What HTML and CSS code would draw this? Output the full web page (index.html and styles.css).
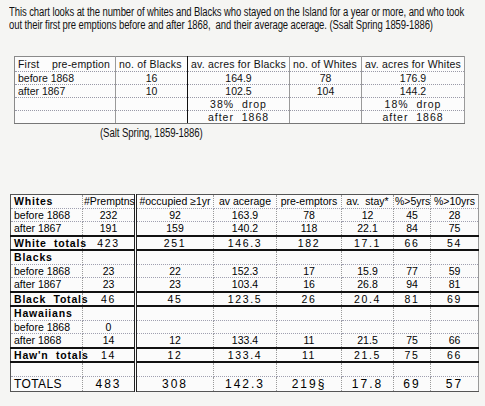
FILE: index.html
```html
<!DOCTYPE html>
<html lang="en">
<head>
    <meta charset="UTF-8">
    <title>Salt Spring pre-emptions</title>
    <link rel="stylesheet" href="styles.css">
</head>
<body>

    <div class="intro-wrap">
        <p class="intro">This chart looks at the number of whites and Blacks who stayed on the Island for a year or more, and who took out their first pre emptions before and after 1868,&nbsp; and their average acerage. (Ssalt Spring 1859-1886)</p>
    </div>

    <table class="summary">
        <colgroup>
            <col class="s-c1"><col class="s-c2"><col class="s-c3"><col class="s-c4"><col class="s-c5">
        </colgroup>
        <tr class="s-head">
            <td class="lbl">First&nbsp;&nbsp;&nbsp; pre-emption</td>
            <td class="split">no. of Blacks</td>
            <td>av. acres for Blacks</td>
            <td>no. of Whites</td>
            <td class="split-l">av. acres for Whites</td>
        </tr>
        <tr>
            <td class="lbl">before 1868</td>
            <td class="split num">16</td>
            <td class="num">164.9</td>
            <td class="num">78</td>
            <td class="split-l num">176.9</td>
        </tr>
        <tr>
            <td class="lbl">after 1867</td>
            <td class="split num">10</td>
            <td class="num">102.5</td>
            <td class="num">104</td>
            <td class="split-l num">144.2</td>
        </tr>
        <tr>
            <td class="lbl"></td>
            <td class="split"></td>
            <td class="num wide">38%&nbsp; drop</td>
            <td></td>
            <td class="split-l num wide">18%&nbsp; drop</td>
        </tr>
        <tr class="s-last">
            <td class="lbl open"></td>
            <td class="split"></td>
            <td class="num wide">after&nbsp; 1868</td>
            <td></td>
            <td class="split-l num wide">after&nbsp; 1868</td>
        </tr>
    </table>

    <div class="caption-wrap">
        <p class="caption">(Salt Spring, 1859-1886)</p>
    </div>

    <table class="detail">
        <colgroup>
            <col class="d-c1"><col class="d-c2"><col class="d-c3"><col class="d-c4">
            <col class="d-c5"><col class="d-c6"><col class="d-c7"><col class="d-c8">
        </colgroup>
        <tr>
            <td class="lbl grp">Whites</td>
            <td class="dbl">#Premptns</td>
            <td class="dbl-l">#occupied ≥1yr</td>
            <td>av acerage</td>
            <td>pre-emptors</td>
            <td>av.&nbsp; stay*</td>
            <td>%&gt;5yrs</td>
            <td>%&gt;10yrs</td>
        </tr>
        <tr>
            <td class="lbl">before 1868</td>
            <td class="dbl">232</td><td class="dbl-l">92</td><td>163.9</td><td>78</td><td>12</td><td>45</td><td>28</td>
        </tr>
        <tr class="pre-total">
            <td class="lbl">after 1867</td>
            <td class="dbl">191</td><td class="dbl-l">159</td><td>140.2</td><td>118</td><td>22.1</td><td>84</td><td>75</td>
        </tr>
        <tr class="total">
            <td class="lbl grp">White&nbsp; totals</td>
            <td class="dbl">423</td><td class="dbl-l">251</td><td>146.3</td><td>182</td><td>17.1</td><td>66</td><td>54</td>
        </tr>
        <tr>
            <td class="lbl grp">Blacks</td>
            <td class="dbl"></td><td class="dbl-l"></td><td></td><td></td><td></td><td></td><td></td>
        </tr>
        <tr>
            <td class="lbl">before 1868</td>
            <td class="dbl">23</td><td class="dbl-l">22</td><td>152.3</td><td>17</td><td>15.9</td><td>77</td><td>59</td>
        </tr>
        <tr class="pre-total">
            <td class="lbl">after 1867</td>
            <td class="dbl">23</td><td class="dbl-l">23</td><td>103.4</td><td>16</td><td>26.8</td><td>94</td><td>81</td>
        </tr>
        <tr class="total">
            <td class="lbl grp">Black&nbsp; Totals</td>
            <td class="dbl">46</td><td class="dbl-l">45</td><td>123.5</td><td>26</td><td>20.4</td><td>81</td><td>69</td>
        </tr>
        <tr>
            <td class="lbl grp">Hawaiians</td>
            <td class="dbl"></td><td class="dbl-l"></td><td></td><td></td><td></td><td></td><td></td>
        </tr>
        <tr>
            <td class="lbl">before 1868</td>
            <td class="dbl">0</td><td class="dbl-l"></td><td></td><td></td><td></td><td></td><td></td>
        </tr>
        <tr class="pre-total">
            <td class="lbl">after 1868</td>
            <td class="dbl">14</td><td class="dbl-l">12</td><td>133.4</td><td>11</td><td>21.5</td><td>75</td><td>66</td>
        </tr>
        <tr class="total">
            <td class="lbl grp">Haw'n&nbsp; totals</td>
            <td class="dbl">14</td><td class="dbl-l">12</td><td>133.4</td><td>11</td><td>21.5</td><td>75</td><td>66</td>
        </tr>
        <tr>
            <td class="lbl"></td>
            <td class="dbl"></td><td class="dbl-l"></td><td></td><td></td><td></td><td></td><td></td>
        </tr>
        <tr class="grand">
            <td class="lbl">TOTALS</td>
            <td class="dbl">483</td><td class="dbl-l">308</td><td>142.3</td><td>219§</td><td>17.8</td><td>69</td><td>57</td>
        </tr>
    </table>

</body>
</html>
```

FILE: styles.css
```css
body {
    margin: 0;
    background-color: #f5f5f3;
    color: #111;
    font-family: 'Liberation Sans', Arial, sans-serif;
}

/* the scan uses a condensed Helvetica, squeeze the regular face */
.intro-wrap {
    height: 26px;
    margin: 6px 0 0 9px;
}

.intro {
    margin: 0;
    width: 595px;
    font-size: 12px;
    line-height: 13px;
    letter-spacing: -0.1px;
    transform: scaleX(0.79);
    transform-origin: left top;
}

/* top summary table */

.summary {
    margin: 24px 0 0 14px;
    border-collapse: collapse;
    table-layout: fixed;
    width: 450px;
    background-color: #fcfcfc;
    font-size: 10.5px;
    border: 1px solid #8a8a8a;
}

.s-c1 { width: 101px; }
.s-c2 { width: 72px; }
.s-c3 { width: 102px; }
.s-c4 { width: 72px; }
.s-c5 { width: 103px; }

.summary td {
    height: 12px;
    padding: 0 3px;
    line-height: 12px;
    white-space: nowrap;
    overflow: visible;
    border-bottom: 1px dotted #9a9aa8;
    border-right: 1px solid #9a9a9a;
}

.summary .s-head td {
    height: 14px;
    letter-spacing: 0.2px;
}

.summary .s-last td {
    border-bottom: 1px solid #777;
}

.summary .lbl {
    text-align: left;
}

.summary .open {
    border-bottom-color: #c8c8c8;
}

.summary .num {
    text-align: center;
}

.summary .wide {
    letter-spacing: 1px;
}

.summary .split {
    border-right: 1.5px solid #111;
}

.summary .split-l {
    border-left: 1.5px solid #111;
}

.caption-wrap {
    height: 14px;
    margin: 2px 0 0 100px;
}

.caption {
    margin: 0;
    width: 140px;
    font-size: 12px;
    line-height: 14px;
    letter-spacing: -0.1px;
    transform: scaleX(0.8);
    transform-origin: left top;
}

/* bottom detail table */

.detail {
    margin: 54px 0 0 10px;
    border-collapse: collapse;
    table-layout: fixed;
    width: 468px;
    background-color: #fbfbfb;
    font-size: 10.5px;
    color: #000;
    border: 1px solid #555;
    border-right-color: #999;
}

.d-c1 { width: 72px; }
.d-c2 { width: 53px; }
.d-c3 { width: 78px; }
.d-c4 { width: 63px; }
.d-c5 { width: 65px; }
.d-c6 { width: 52px; }
.d-c7 { width: 37px; }
.d-c8 { width: 48px; }

.detail td {
    height: 12.5px;
    padding: 0 1px;
    line-height: 12px;
    text-align: center;
    white-space: nowrap;
    overflow: visible;
    border-bottom: 1px dotted #a0a0b0;
    border-right: 1px dotted #9a9a9a;
}

.detail .lbl {
    text-align: left;
    padding-left: 3px;
}

.detail .grp {
    font-weight: bold;
    letter-spacing: 0.8px;
}

.detail .dbl {
    border-right: 3px double #222;
}

.detail .dbl-l {
    border-left: 3px double #222;
}

.detail .pre-total td {
    border-bottom: 2px solid #111;
}

.detail .total td {
    border-bottom: 2px solid #111;
    letter-spacing: 1.6px;
}

.detail .total .grp {
    letter-spacing: 0.8px;
}

.detail .grand td {
    height: 14px;
    font-size: 12px;
    letter-spacing: 2px;
    border-bottom: 1px solid #555;
}

.detail .grand .lbl {
    letter-spacing: 0.4px;
}
```
